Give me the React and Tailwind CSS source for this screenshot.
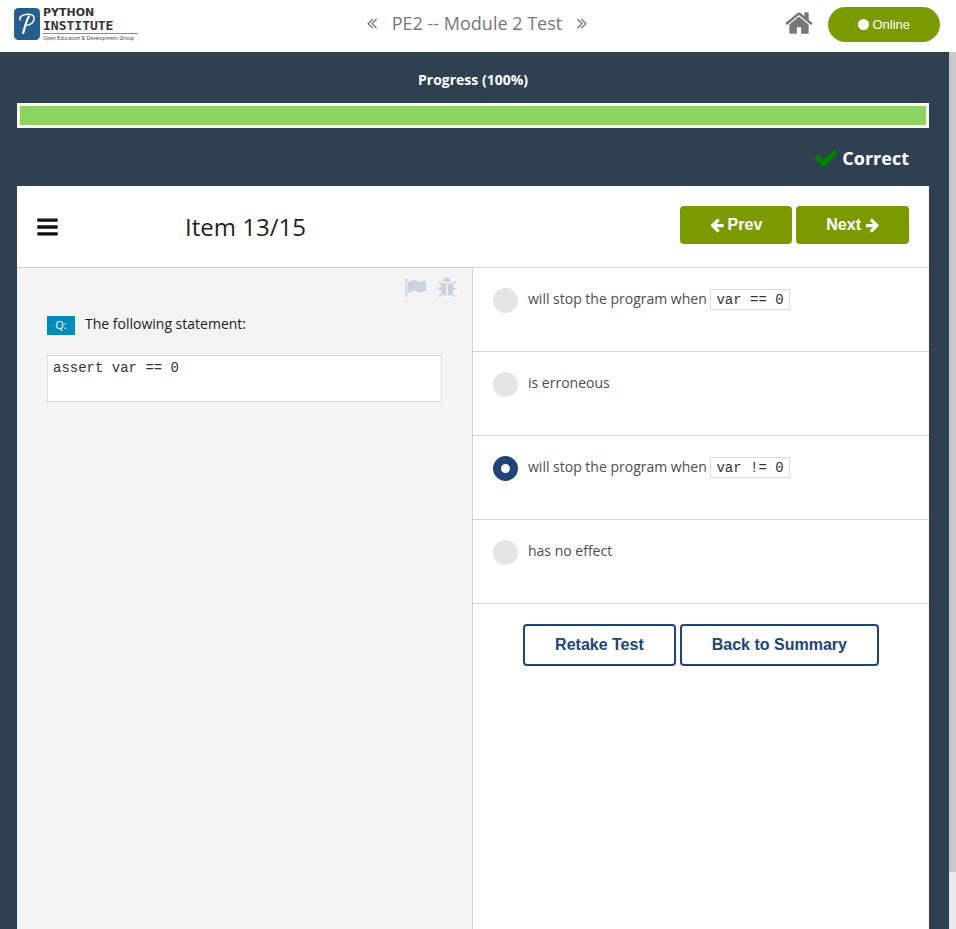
import React, { useState } from "react";

const ICONS = {
  home: "M1472 992v480q0 26-19 45t-45 19h-384v-384h-256v384h-384q-26 0-45-19t-19-45v-480q0-1 .5-3t.5-3l575-474 575 474q1 2 1 6zm223-69l-62 74q-8 9-21 11h-3q-13 0-21-7l-692-577-692 577q-12 8-24 7-13-2-21-11l-62-74q-8-10-7-23.5t11-21.5l719-599q32-26 76-26t76 26l244 204v-195q0-14 9-23t23-9h192q14 0 23 9t9 23v408l219 182q10 8 11 21.5t-7 23.5z",
  check: "M1671 566q0 40-28 68l-724 724-136 136q-28 28-68 28t-68-28l-136-136-362-362q-28-28-28-68t28-68l136-136q28-28 68-28t68 28l294 295 656-657q28-28 68-28t68 28l136 136q28 28 28 68z",
  left: "M1664 896v128q0 53-32.5 90.5t-84.5 37.5h-704l293 294q38 36 38 90t-38 90l-75 76q-37 37-90 37-52 0-91-37l-651-652q-37-37-37-90 0-52 37-91l651-650q38-38 91-38 52 0 90 38l75 74q38 38 38 91t-38 91l-293 293h704q52 0 84.5 37.5t32.5 90.5z",
  right: "M1600 960q0 54-37 91l-651 651q-39 37-91 37-51 0-90-37l-75-75q-38-38-38-91t38-91l293-293h-704q-52 0-84.5-37.5t-32.5-90.5v-128q0-53 32.5-90.5t84.5-37.5h704l-293-294q-38-36-38-90t38-90l75-75q38-38 90-38 53 0 91 38l651 651q37 35 37 90z",
  flag: "M320 256q0 72-64 110v1266q0 13-9.5 22.5t-22.5 9.5h-64q-13 0-22.5-9.5t-9.5-22.5v-1266q-64-38-64-110 0-53 37.5-90.5t90.5-37.5 90.5 37.5 37.5 90.5zm1472 64v763q0 25-12.5 38.5t-39.5 27.5q-215 116-369 116-61 0-123.5-22t-108.5-48-115.5-48-142.5-22q-192 0-464 146-17 9-33 9-26 0-45-19t-19-45v-742q0-32 31-55 21-14 79-43 236-120 421-120 107 0 200 29t219 88q38 19 88 19 54 0 117.5-21t110-47 88-47 54.5-21q26 0 45 19t19 45z",
  bug: "M1696 960q0 26-19 45t-45 19h-224q0 171-67 290l208 209q19 19 19 45t-19 45q-18 19-45 19t-45-19l-198-197q-5 5-15 13t-42 28.5-65 36.5-82 29-97 13v-896h-128v896q-51 0-101.5-13.5t-87-33-66-39-43.5-32.5l-15-14-183 207q-20 21-48 21-24 0-43-16-19-18-20.5-44.5t15.5-46.5l202-227q-58-114-58-274h-224q-26 0-45-19t-19-45 19-45 45-19h224v-294l-173-173q-19-19-19-45t19-45 45-19 45 19l173 173h844l173-173q19-19 45-19t45 19 19 45-19 45l-173 173v294h224q26 0 45 19t19 45zm-480-576h-640q0-133 93.5-226.5t226.5-93.5 226.5 93.5 93.5 226.5z",
  bars: "M1664 1344v128q0 26-19 45t-45 19h-1408q-26 0-45-19t-19-45v-128q0-26 19-45t45-19h1408q26 0 45 19t19 45zm0-512v128q0 26-19 45t-45 19h-1408q-26 0-45-19t-19-45v-128q0-26 19-45t45-19h1408q26 0 45 19t19 45zm0-512v128q0 26-19 45t-45 19h-1408q-26 0-45-19t-19-45v-128q0-26 19-45t45-19h1408q26 0 45 19t19 45z",
  doubleLeft: "M1011 1376q0 13-10 23l-50 50q-10 10-23 10t-23-10l-466-466q-10-10-10-23t10-23l466-466q10-10 23-10t23 10l50 50q10 10 10 23t-10 23l-393 393 393 393q10 10 10 23zm384 0q0 13-10 23l-50 50q-10 10-23 10t-23-10l-466-466q-10-10-10-23t10-23l466-466q10-10 23-10t23 10l50 50q10 10 10 23t-10 23l-393 393 393 393q10 10 10 23z",
  doubleRight: "M979 960q0 13-10 23l-466 466q-10 10-23 10t-23-10l-50-50q-10-10-10-23t10-23l393-393-393-393q-10-10-10-23t10-23l50-50q10-10 23-10t23 10l466 466q10 10 10 23zm384 0q0 13-10 23l-466 466q-10 10-23 10t-23-10l-50-50q-10-10-10-23t10-23l393-393-393-393q-10-10-10-23t10-23l50-50q10-10 23-10t23 10l466 466q10 10 10 23z",
};

function Icon({ name, className, viewBox = "0 0 1792 1792" }) {
  return (
    <svg viewBox={viewBox} className={className} fill="currentColor" aria-hidden="true">
      <path d={ICONS[name]} />
    </svg>
  );
}

function Logo() {
  return (
    <a href="#home" className="flex items-center gap-[3px] font-['DejaVu_Sans',sans-serif] text-[#333]">
      <svg viewBox="0 0 26 32" className="h-8 w-[26px]" aria-hidden="true">
        <rect width="26" height="32" rx="4.500" fill="#265f8e" />
        <path d="M6.200 11.800C4.500 9 8.500 6.600 13.500 6.200C18.500 5.800 21 8.200 20 11.800C19 15.200 15.500 17.500 12 17.200" fill="none" stroke="#fff" strokeWidth="1.500" strokeLinecap="round" />
        <path d="M14.800 8.500C12.500 12 11 18 9.200 25" fill="none" stroke="#fff" strokeWidth="2.200" strokeLinecap="round" />
      </svg>
      <span className="flex w-[95px] flex-col">
        <span className="text-[11px] leading-[13px] font-bold">PYTHON</span>
        <span className="border-b border-[#6d94b5] font-['DejaVu_Sans_Mono',monospace] text-[13px] leading-[14px] font-bold">INSTITUTE</span>
        <span className="font-['Open_Sans',sans-serif] text-[5px] leading-[8px] whitespace-nowrap">Open Education &amp; Development Group</span>
      </span>
    </a>
  );
}

function Header() {
  return (
    <header className="grid h-[52px] shrink-0 grid-cols-[1fr_auto_1fr] items-center bg-white pr-4 pl-[14px] text-[#777]">
      <div className="flex pb-1">
        <Logo />
      </div>
      <nav className="flex items-center gap-[11px] pb-[6px]">
        <button type="button" aria-label="Previous module">
          <Icon name="doubleLeft" className="size-[18px]" />
        </button>
        <h1 className="text-[18px] leading-6">PE2 -- Module 2 Test</h1>
        <button type="button" aria-label="Next module">
          <Icon name="doubleRight" className="size-[18px]" />
        </button>
      </nav>
      <div className="flex items-center justify-end gap-[14px] pb-[3px]">
        <a href="#home" aria-label="Home" className="pb-[3px]">
          <Icon name="home" className="size-[30px]" />
        </a>
        <button type="button" className="flex h-[35px] items-center gap-[3px] rounded-full bg-[#7b9a00] px-[30px] font-['Liberation_Sans',sans-serif] text-[13px] text-white">
          <span className="size-[11px] rounded-full bg-white" />
          Online
        </button>
      </div>
    </header>
  );
}

function Code({ children }) {
  return (
    <code className="border border-[#ddd] bg-white px-[5px] pt-[2px] pb-px font-['Liberation_Mono',monospace] text-[14px] text-[#333]">
      {children}
    </code>
  );
}

const OPTIONS = [
  { text: "will stop the program when", code: "var == 0" },
  { text: "is erroneous" },
  { text: "will stop the program when", code: "var != 0" },
  { text: "has no effect" },
];

const navButton =
  "flex h-[38px] items-center gap-1 rounded-[4px] bg-[#7b9a00] px-[30px] font-['Liberation_Sans',sans-serif] text-[16px] font-bold text-white";
const outlineButton =
  "h-[42px] rounded-[4px] border-2 border-[#214478] px-[30px] font-['Liberation_Sans',sans-serif] text-[16px] font-bold text-[#214478]";

export default function App() {
  const [selected, setSelected] = useState(2);
  return (
    <div className="flex h-screen flex-col overflow-hidden font-['Open_Sans',sans-serif] text-[14px] text-[#222]">
      <Header />
      <div className="flex min-h-0 flex-1">
        <main className="flex flex-1 flex-col bg-[#2f4050] pr-5 pl-[17px]">
          <p className="pt-[18px] pb-[13px] text-center leading-5 font-bold text-white">Progress (100%)</p>
          <div className="h-[25px] shrink-0 border-[3px] border-[#f8f8f8] bg-[#8dd45f]" role="progressbar" aria-label="Progress" aria-valuenow={100} />
          <div className="flex h-[58px] shrink-0 items-center justify-end gap-[3px] pt-[2px] pr-5 text-[18px] font-bold text-white">
            <Icon name="check" className="size-[26px] text-[#008000]" />
            Correct
          </div>

          <section className="flex flex-1 flex-col bg-white">
            <div className="flex h-[82px] shrink-0 items-center border-b border-[#d3d3d3] px-5 pb-1">
              <button type="button" aria-label="Menu" className="w-[148px] pt-[5px]">
                <Icon name="bars" className="h-6 w-[21px] text-[#111]" viewBox="128 0 1536 1792" />
              </button>
              <h2 className="flex-1 pt-1 text-[24px] leading-8">Item 13/15</h2>
              <div className="flex gap-1">
                <button type="button" className={navButton}>
                  <Icon name="left" className="h-4 w-[14px]" viewBox="96 0 1600 1792" />
                  Prev
                </button>
                <button type="button" className={navButton}>
                  Next
                  <Icon name="right" className="h-4 w-[14px]" viewBox="32 0 1600 1792" />
                </button>
              </div>
            </div>

            <div className="grid flex-1 grid-cols-2">
              <div className="border-r border-[#d3d3d3] bg-[#f4f4f4]">
                <div className="flex justify-end gap-1 pt-[9px] pr-[14px] text-[#cbd3de]">
                  <button type="button" aria-label="Flag item" className="w-7 border-b border-dotted border-[#e8e8e8] pb-[3px]">
                    <Icon name="flag" className="size-[22px]" />
                  </button>
                  <button type="button" aria-label="Report a bug" className="border-b border-dotted border-[#e8e8e8] pb-[3px]">
                    <Icon name="bug" className="size-[22px]" />
                  </button>
                </div>
                <div className="px-[30px]">
                  <div className="flex items-start gap-[10px] pt-[11px]">
                    <span className="mt-[2px] flex h-[19px] w-7 items-center justify-center bg-[#008cba] text-[11px] text-white">Q:</span>
                    <p className="leading-5">The following statement:</p>
                  </div>
                  <pre className="mt-5 h-[47px] border border-[#ddd] bg-white px-[5px] pt-[2px] font-['Liberation_Mono',monospace] text-[14px] leading-[21px] text-[#333]">assert var == 0</pre>
                </div>
              </div>

              <div>
                {OPTIONS.map((option, i) => (
                  <label key={i} className="flex h-[84px] items-start gap-[10px] border-b border-[#d3d3d3] px-5 pt-5 text-[#4d4d4d]">
                    <input
                      type="radio"
                      name="answer"
                      checked={selected === i}
                      onChange={() => setSelected(i)}
                      className="size-[25px] shrink-0 appearance-none rounded-full bg-[#e5e5e5] checked:border-8 checked:border-[#214478] checked:bg-white"
                    />
                    <span className="leading-[22px]">
                      {option.text} {option.code && <Code>{option.code}</Code>}
                    </span>
                  </label>
                ))}
                <div className="flex justify-center gap-1 pt-5">
                  <button type="button" className={outlineButton}>Retake Test</button>
                  <button type="button" className={outlineButton}>Back to Summary</button>
                </div>
              </div>
            </div>
          </section>
        </main>
        <div className="w-[7px] bg-[#e9e9e9]">
          <div className="h-[93.5%] bg-[#cacaca]" />
        </div>
      </div>
    </div>
  );
}
